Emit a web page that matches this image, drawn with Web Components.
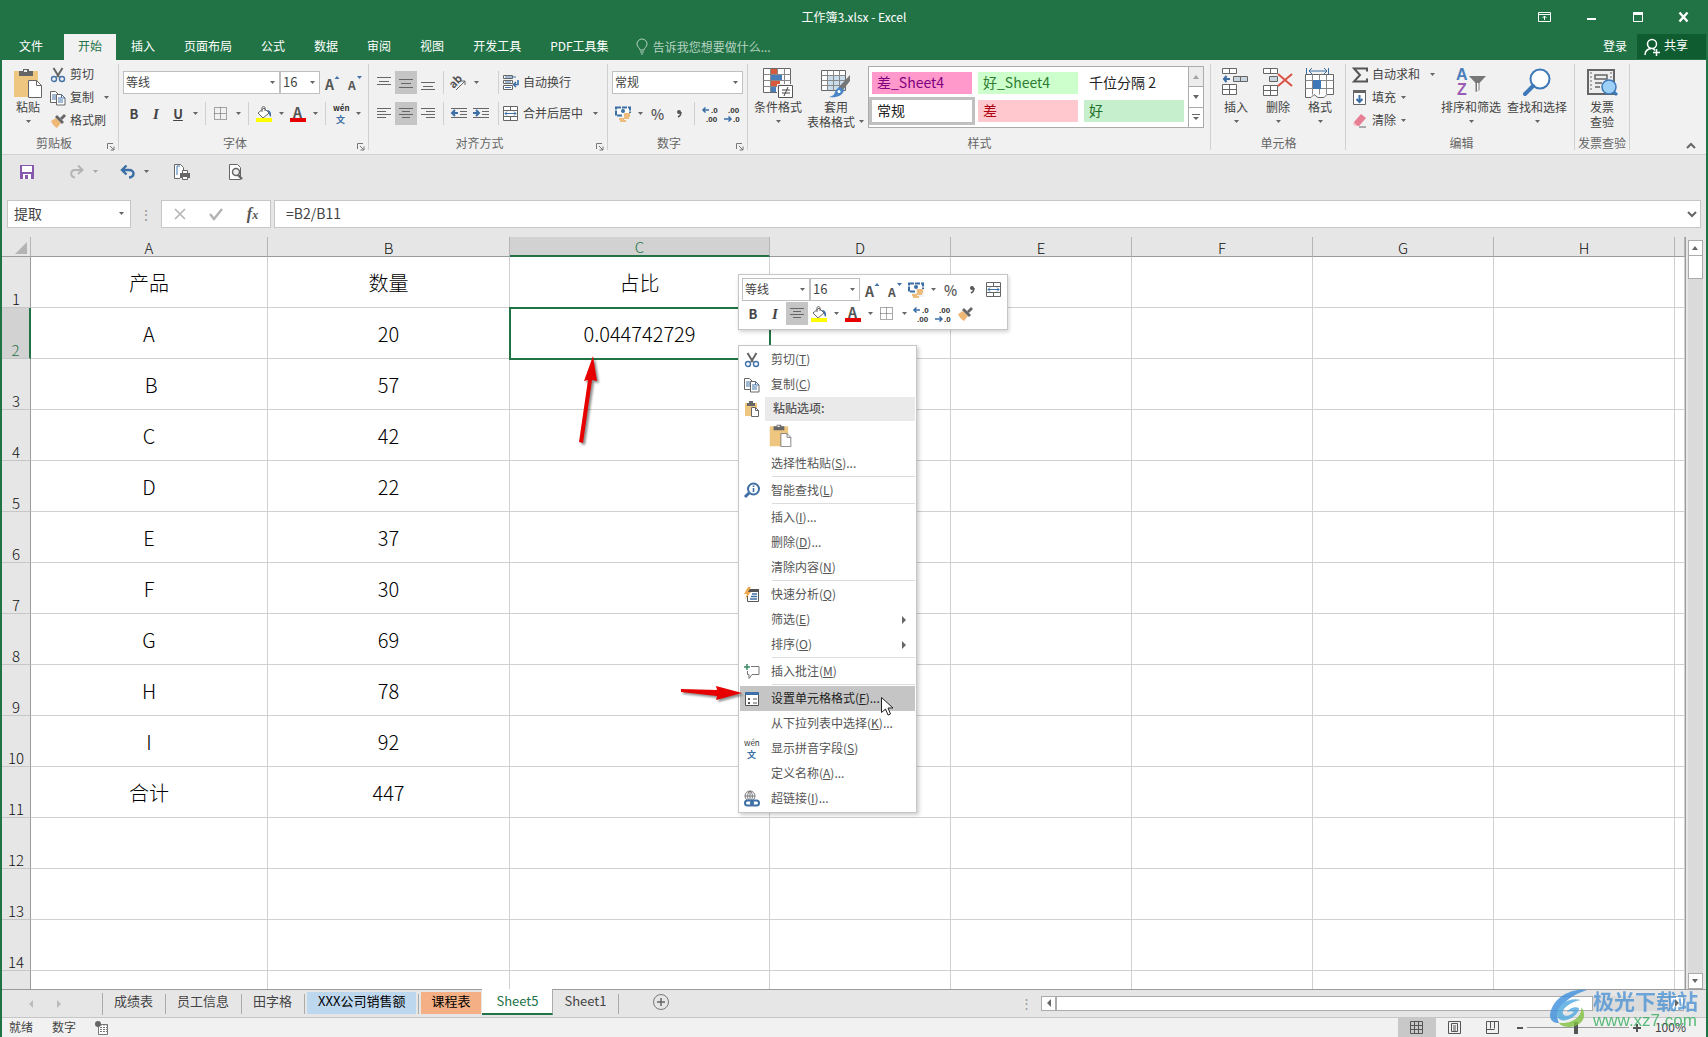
<!DOCTYPE html>
<html lang="zh-CN">
<head>
<meta charset="utf-8">
<title>工作簿3.xlsx - Excel</title>
<style>
html, body { margin: 0; height: 100%; overflow: hidden; }
body { font: 12px/16px "Noto Sans CJK SC", "Noto Sans", sans-serif; color: #444; }
</style>
</head>
<body>
<xl-app></xl-app>
<script>
const ICONS = {
  caret: [7, 4, '<path d="M1 0h5L3.500 3z" fill="#666"/>'],
  paste: [30, 30, '<path d="M1 3h24v26H1z" fill="#efc67f"/><path d="M6 3h4V1h6v2h4v5H6z" fill="#666"/><path d="M11 2h3v2h-3z" fill="#eee"/><path d="M15.500 12.500h8l5 5v12h-13z" fill="#fff" stroke="#666"/><path d="M23.500 12.500v5h5" fill="none" stroke="#666"/>'],
  pasteSmall: [16, 16, '<path d="M1 2h12v13H1z" fill="#efc67f"/><path d="M3 2h2V0h4v2h2v3H3z" fill="#666"/><path d="M7.500 6.500h4l3 3v6h-7z" fill="#fff" stroke="#666"/><path d="M11.500 6.500v3h3" fill="none" stroke="#666"/>'],
  cut: [16, 16, '<path d="M3.500 1l5.500 9M12.500 1L7 10" stroke="#666" stroke-width="2" fill="none"/><circle cx="4" cy="12" r="2.500" fill="none" stroke="#4472a8" stroke-width="1.400"/><circle cx="12" cy="12" r="2.500" fill="none" stroke="#4472a8" stroke-width="1.400"/>'],
  copy: [16, 16, '<path d="M.5 1.500h5l3 3v8h-8z" fill="#fff" stroke="#666"/><path d="M2 5h4M2 7h4M2 9h4" stroke="#4472a8"/><path d="M6.500 4.500h5l3.500 3.500v7h-8.500z" fill="#fff" stroke="#666"/><path d="M11.500 4.500v3.500h3.500M8 8h3M8 10h5M8 12h5" fill="none" stroke="#4472a8"/>'],
  brush: [16, 16, '<path d="M1 8l5-3 5 5-4 5c-2-1-5-4-6-7z" fill="#efb877"/><path d="M5 4l2-2 7 7-2 2z" fill="#666"/><path d="M10 5l4-4 2 2-4 4z" fill="#666"/>'],
  incFont: [16, 16, '<text x="1" y="15" font-size="14" font-weight="700" fill="#555">A</text><path d="M10.500 4h5L13 1z" fill="#4472a8"/>'],
  decFont: [16, 16, '<text x="2" y="15" font-size="12" font-weight="700" fill="#555">A</text><path d="M11 1h5l-2.500 3z" fill="#4472a8"/>'],
  borders: [14, 14, '<path d="M.5.500h12v12H.5zM6.500.500v12M.5 6.500h12" fill="none" stroke="#555" stroke-dasharray="1 1"/>'],
  fill: [16, 16, '<path d="M2 7l6-5 5 5-6 5z" fill="#fff" stroke="#666"/><path d="M6 6V2c0-2 3-2 3 0v3" fill="none" stroke="#666"/><path d="M11 4c3 0 4.500 2 4 7-2-1-2-3-2-4z" fill="#4472a8"/><path d="M0 12h16v4H0z" fill="#ff0"/>'],
  fontColor: [16, 16, '<text x="3" y="12" font-size="14" font-weight="700" fill="#555">A</text><path d="M0 12h16v4H0z" fill="#e80000"/>'],
  wen: [18, 18, '<text x="1" y="6" font-size="8" fill="#333">wén</text><text x="4" y="18" font-size="9" font-weight="700" fill="#3a6ea5">文</text>'],
  alTop: [16, 16, '<path d="M1 2.500h14M3 6.500h10M1 9.500h14" stroke="#666"/>'],
  alMid: [16, 16, '<path d="M1 4.500h14M3 8.500h10M1 12.500h14" stroke="#666"/>'],
  alBot: [16, 16, '<path d="M1 7.500h14M3 11.500h10M1 14.500h14" stroke="#666"/>'],
  left: [16, 16, '<path d="M1 2.500h14M1 5.500h9M1 8.500h14M1 11.500h9" stroke="#666"/>'],
  center: [16, 16, '<path d="M1 2.500h14M4 5.500h8M1 8.500h14M4 11.500h8" stroke="#666"/>'],
  right: [16, 16, '<path d="M1 2.500h14M6 5.500h9M1 8.500h14M6 11.500h9" stroke="#666"/>'],
  orient: [18, 16, '<g transform="rotate(-45 7 9)"><text x="1" y="10" font-size="11" font-weight="700" fill="#555">ab</text></g><path d="M6 15L15 6M11 6h4v4" stroke="#666" fill="none"/>'],
  outdent: [16, 16, '<path d="M0 2.500h16M9 5.500h7M9 8.500h7M0 11.500h16" stroke="#666"/><path d="M7 7H1M4 4L1 7l3 3" stroke="#3a6ea5" stroke-width="2" fill="none"/>'],
  indent: [16, 16, '<path d="M0 2.500h16M9 5.500h7M9 8.500h7M0 11.500h16" stroke="#666"/><path d="M0 7h6M3 4l3 3-3 3" stroke="#3a6ea5" stroke-width="2" fill="none"/>'],
  wrap: [16, 16, '<path d="M.5.500h9v3h-9zM.5 5.500h9v3h-9zM.5 10.500h9v4h-9z" fill="#fff" stroke="#666"/><path d="M2 2h11M2 7h6M2 12.500h6" stroke="#4472a8"/><path d="M15 5v4.500h-4M13 7l-2.500 2.500L13 12" stroke="#3a6ea5" fill="none" stroke-width="1.500"/>'],
  merge: [16, 16, '<path d="M.5.500h14v14H.5zM.5 4.500h14M.5 10.500h14M7.500.500v4M7.500 10.500v4" fill="#fff" stroke="#666"/><path d="M2 7.500h11M4 5.500l-2 2 2 2M11 5.500l2 2-2 2" stroke="#3a6ea5" fill="none"/>'],
  money: [16, 16, '<path d="M1 1.500h14v8H1z" fill="#fff" stroke="#3a6ea5" stroke-width="2" stroke-dasharray="5 1"/><circle cx="8" cy="5" r="2" fill="#3a6ea5"/><path d="M8 7h8v8H4v-4h4z" fill="#f1f1f1"/><path d="M9 8h6M9 10h6M9 12h5M4 13h5M5 15h6" stroke="#eba956" stroke-width="1.500"/>'],
  pct: [16, 16, '<text x="2" y="14" font-size="14" font-weight="500" fill="#555">%</text>'],
  comma: [16, 16, '<circle cx="8" cy="6" r="2" fill="#555"/><path d="M10 6c0 3-1 4-3 5" stroke="#555" fill="none" stroke-width="1.500"/>'],
  incDec: [18, 16, '<g font-family="Liberation Sans" font-size="8" fill="#333"><text x="10" y="7">.0</text><text x="5" y="16">.00</text></g><path d="M8 4H2M4.500 1.500L2 4l2.500 2.500" stroke="#3a6ea5" fill="none" stroke-width="1.500"/>'],
  decDec: [18, 16, '<g font-family="Liberation Sans" font-size="8" fill="#333"><text x="5" y="7">.00</text><text x="10" y="16">.0</text></g><path d="M1 13h7M5.500 10.500L8 13l-2.500 2.500" stroke="#3a6ea5" fill="none" stroke-width="1.500"/>'],
  cond: [30, 30, '<path d="M.5.500h27v24H.5z" fill="#fff" stroke="#666"/><path d="M.5 6.500h27M.5 12.500h27M.5 18.500h27M7.500.500v24M14.500.500v24M21.500.500v24" stroke="#888"/><path d="M8 1h6v5H8zM8 13h9v5H8z" fill="#d9593c"/><path d="M8 7h11v5H8zM8 19h5v5H8z" fill="#4a7ebb"/><path d="M14 16h16v14H14z" fill="#f1f1f1"/><path d="M15.500 17.500h14v12h-14z" fill="#fff" stroke="#555"/><path d="M19 22h8M19 25h8M25 19l-4 9" stroke="#444"/>'],
  tableFmt: [30, 30, '<path d="M.5 2.500h24v20H.5z" fill="#fff" stroke="#666"/><path d="M7 8h17v14H7z" fill="#c9dcec"/><path d="M.5 7.500h24M.5 12.500h24M.5 17.500h24M6.500 2.500v20M12.500 2.500v20M18.500 2.500v20" stroke="#888"/><path d="M29 7v6l-8 10-4-3z" fill="#777"/><path d="M19 19l4 3c-1 6-8 8-15 7 4-1 5-2 6-5 1-3 3-4 5-5z" fill="#4a86c5"/><circle cx="18" cy="23.500" r="1.500" fill="#fff"/>'],
  insCells: [28, 30, '<path d="M.5.500h14v5H.5zM7.500.500v5M.5 16.500h14v10H.5zM7.500 16.500v10M.5 21.500h14" fill="#fff" stroke="#666"/><path d="M11.500 8.500h14v5h-14zM18.500 8.500v5" fill="#c9d6e0" stroke="#666"/><path d="M8 11H2M4.500 8L2 11l2.500 3" fill="none" stroke="#3a6ea5" stroke-width="2"/>'],
  delCells: [30, 30, '<path d="M.5.500h14v5H.5zM7.500.500v5M.5 17.500h14v10H.5zM7.500 17.500v10M.5 22.500h14" fill="#fff" stroke="#666"/><path d="M6.500 8.500h8v5h-8z" fill="#c9d6e0" stroke="#666"/><path d="M15 6l14 12M29 6L15 18" fill="none" stroke="#dd5145" stroke-width="2"/>'],
  fmtCells: [30, 31, '<path d="M1.500 0v6M23.500 0v6M4 3h18M7 0L4 3l3 3M19 0l3 3-3 3" stroke="#3a6ea5" fill="none"/><path d="M.5 6.500h28v20H22l-3 3h-6l-4-3-3 3H.5z" fill="#fff" stroke="#666"/><path d="M7.500 6.500v20M14.500 6.500v20M21.500 6.500v20M.5 12.500h28M.5 20.500h28" stroke="#888"/><path d="M8 12h8v9H8z" fill="#3f78b8"/>'],
  sum: [16, 16, '<path d="M15 4.500V1.500H2l6 6.500-6 6.500h13v-3" fill="none" stroke="#555" stroke-width="2"/>'],
  fillDown: [16, 16, '<path d="M1.500 1.500h12v13h-12z" fill="#fff" stroke="#666"/><path d="M1 0h13v3H1z" fill="#666"/><path d="M7.500 5v7M4.500 9l3 3 3-3" fill="none" stroke="#3a6ea5" stroke-width="2"/>'],
  eraser: [16, 16, '<path d="M2 9l7-8 5 4-7 8H4z" fill="#e77f94"/><path d="M1 9l5 4H3l-2-2z" fill="#f6c1cb"/><path d="M7 14h7" stroke="#666"/>'],
  sort: [30, 30, '<g font-family="Liberation Sans" font-size="16" font-weight="700"><text x="0" y="12" fill="#4a7ebb">A</text><text x="1" y="27" fill="#9a5cb4">Z</text></g><path d="M13 8h17l-6.500 7v7l-4 2v-9z" fill="#777"/><path d="M21 15h1.500v7l-1.500 1z" fill="#fff"/>'],
  find: [30, 30, '<circle cx="18" cy="11" r="9.500" fill="#fdfdfd" stroke="#3f78b8" stroke-width="2"/><path d="M11 18L3 26" stroke="#3f78b8" stroke-width="4" stroke-linecap="round"/>'],
  invoice: [32, 30, '<path d="M2 2h26v24H2z" fill="#eee" stroke="#666" stroke-width="2"/><path d="M5 4v20M25 4v9" stroke="#666" stroke-dasharray="2 2"/><path d="M9 7h12v4H9zM9 15h7M9 19h5" fill="none" stroke="#666" stroke-width="1.500"/><circle cx="23" cy="19" r="7" fill="#9cd0f7" stroke="#3f78b8" stroke-width="1.500"/><path d="M28 24l3 3" stroke="#3f78b8" stroke-width="3"/>'],
  launcher: [8, 8, '<path d="M.5 6V.5H6M3 3l4 4M7 3.500V7H3.500" fill="none" stroke="#777"/>'],
  chevUp: [10, 8, '<path d="M1 6l4-4 4 4" fill="none" stroke="#666" stroke-width="2"/>'],
  chevDown: [10, 8, '<path d="M1 2l4 4 4-4" fill="none" stroke="#666" stroke-width="2"/>'],
  save: [16, 16, '<path d="M1 1h14v14H1z" fill="#8658ae"/><path d="M3 2h10v6H3zM4 10h8v5H4z" fill="#fff"/><path d="M6 11h3v4H6z" fill="#8658ae"/>'],
  redo: [16, 16, '<path d="M13 6H6c-5 0-5 7 0 7.500M9 1.500L13.500 6 9 10" fill="none" stroke="#b4b4b4" stroke-width="2"/>'],
  undo: [16, 16, '<path d="M2 6h7c6 0 6 7 0 7.500M6.500 1.500L2 6l4.500 4.500" fill="none" stroke="#3a6ea5" stroke-width="2.400"/>'],
  print: [18, 18, '<path d="M7 15.500H1.500v-14h6l3 3V7" fill="#fff" stroke="#666"/><path d="M4 3v9M4 3h3" stroke="#3f78b8" fill="none"/><path d="M7 10h10v5H7z" fill="#666"/><path d="M9.500 7.500h5v3h-5zM9.500 13.500h5v3h-5z" fill="#fff" stroke="#666"/>'],
  preview: [16, 18, '<path d="M1.500 1.500h8l3 3v12h-11z" fill="#fff" stroke="#666"/><circle cx="8" cy="9" r="3.500" fill="#eee" stroke="#666" stroke-width="1.500"/><path d="M10 12l4 4" stroke="#666" stroke-width="2.400"/>'],
  cancel: [12, 12, '<path d="M1 1l10 10M11 1L1 11" stroke="#b4b4b4" stroke-width="1.600"/>'],
  ok: [14, 12, '<path d="M1 6l4 5 8-10" stroke="#b4b4b4" stroke-width="2.400" fill="none"/>'],
  bulb: [12, 16, '<path d="M4 11c0-2-3-3-3-6a5 5 0 0 1 10 0c0 3-3 4-3 6zM4 13h4M5 15h2" fill="none" stroke="#b5d2c0"/>'],
  share: [18, 18, '<circle cx="9" cy="6" r="4.500" fill="none" stroke="#fff" stroke-width="1.500"/><path d="M2 17c0-4 3-6 6-6.500M10 10.500l2 2M10 14.500h7M13.500 11v7" fill="none" stroke="#fff" stroke-width="1.500"/>'],
  ribbonOpt: [14, 12, '<path d="M.5 1.500h12v9H.5zM.5 3.500h12M6.500 9V5M4.500 7l2-2 2 2" fill="none" stroke="#fff"/>'],
  min: [12, 12, '<path d="M1 8h9" stroke="#fff" stroke-width="2"/>'],
  max: [12, 12, '<path d="M1.500 1.500h9v9h-9z" fill="none" stroke="#fff"/><path d="M1 1h10v3H1z" fill="#fff"/>'],
  close: [12, 12, '<path d="M1.500 1.500l8 9M9.500 1.500l-8 9" stroke="#fff" stroke-width="2.400"/>'],
  up: [8, 8, '<path d="M1 6h6L4 2z" fill="#666"/>'],
  down: [8, 8, '<path d="M1 2h6L4 6z" fill="#666"/>'],
  lt: [8, 8, '<path d="M6 0v8L2 4z" fill="#666"/>'],
  rt: [8, 8, '<path d="M2 0v8l4-4z" fill="#666"/>'],
  ltOff: [8, 8, '<path d="M6 0v8L2 4z" fill="#bbb"/>'],
  rtOff: [8, 8, '<path d="M2 0v8l4-4z" fill="#bbb"/>'],
  more: [8, 8, '<path d="M0 1.500h8" stroke="#666"/><path d="M1 4h6L4 7z" fill="#666"/>'],
  plus: [18, 18, '<circle cx="9" cy="9" r="7.500" fill="none" stroke="#777"/><path d="M5 9h8M9 5v8" stroke="#666" stroke-width="1.500"/>'],
  zoomOut: [8, 8, '<path d="M1 4h6" stroke="#555" stroke-width="2"/>'],
  zoomIn: [8, 8, '<path d="M0 4h8M4 0v8" stroke="#555" stroke-width="2"/>'],
  macro: [14, 14, '<path d="M3.500 3.500h9v10h-9z" fill="#fff" stroke="#777"/><path d="M5 4h8M5 6.500h7M5 8.500h7M5 10.500h7" stroke="#777" stroke-dasharray="2 1"/><circle cx="3" cy="3" r="3" fill="#666"/>'],
  vNormal: [14, 14, '<path d="M.5.500h12v12H.5zM4.500.500v12M8.500.500v12M.5 4.500h12M.5 8.500h12" fill="none" stroke="#555"/>'],
  vPage: [14, 14, '<path d="M.5.500h12v12H.5zM3.500 2.500h6v8h-6zM5 5h3M5 7h3M5 9h3" fill="none" stroke="#555"/>'],
  vBreak: [14, 14, '<path d="M.5.500h12v12H.5zM4.500.500v7M8.500.500v7M.5 8.500h8" fill="none" stroke="#555"/>'],
  smart: [18, 18, '<circle cx="10.500" cy="7" r="5.500" fill="#fff" stroke="#3f6fa5" stroke-width="2"/><path d="M6 11l-4 4" stroke="#3f6fa5" stroke-width="3"/><path d="M10.500 6v4M10.500 3.500v1.500" stroke="#3f6fa5" stroke-width="1.600"/>'],
  quick: [16, 16, '<path d="M3.500 2.500h11v12h-11z" fill="#fff" stroke="#555"/><path d="M4 2h11v3H4z" fill="#555"/><path d="M8 7h5M7 9.500h6M6 12h7" stroke="#3f6fa5" stroke-width="1.500"/><path d="M4 0L0 7h3l-2 5 6-7H4l3-5z" fill="#f0a94c"/>'],
  comment: [16, 16, '<path d="M7 2.500h8v8H8l-3 4v-4H3.500V7" fill="none" stroke="#777"/><path d="M3 0v6M0 3h6" stroke="#3b8a66" stroke-width="1.500"/>'],
  format: [16, 16, '<path d="M1.500 1.500h13v13h-13z" fill="#fff" stroke="#555"/><path d="M1 1h14v3H1z" fill="#3f6fa5"/><path d="M9 8h4M9 12h4" stroke="#555"/><path d="M4 7h2v2H4zM4 11h2v2H4z" fill="#555"/>'],
  link: [18, 18, '<circle cx="7" cy="6" r="5" fill="none" stroke="#777"/><path d="M7 1v10M2 6h10M7 1C4 3 4 8 6 11M7 1c3 2 3 7 1 10" fill="none" stroke="#777"/><rect x="2" y="10.500" width="8" height="5" rx="2.500" fill="#fff" stroke="#3f6fa5" stroke-width="2"/><rect x="8" y="10.500" width="8" height="5" rx="2.500" fill="none" stroke="#3f6fa5" stroke-width="2"/>']
};

function define(tag, css, html) {
  const tpl = document.createElement('template');
  customElements.define(tag, class extends HTMLElement {
    connectedCallback() {
      if (this.shadowRoot) return;
      tpl.innerHTML = `<style>*{box-sizing:border-box}button{font:inherit;color:inherit;background:none;border:0;padding:0;margin:0;cursor:default}select,input{font:inherit;color:inherit;margin:0;border-radius:0;outline:0}${css}</style>` +
        (typeof html === 'function' ? html(this) : html);
      this.attachShadow({ mode: 'open' }).append(tpl.content.cloneNode(true));
    }
  });
}
const ic = n => `<xl-icon name="${n}"></xl-icon>`;
const tool = (n, label, opts = '') => `<xl-tool icon="${n}" label="${label}" ${opts}></xl-tool>`;

define('xl-icon', ':host{display:block;flex:none}svg{display:block;overflow:visible}', el => {
  const [w, h, body] = ICONS[el.getAttribute('name')];
  return `<svg width="${w}" height="${h}" viewBox="0 0 ${w} ${h}" aria-hidden="true">${body}</svg>`;
});

define('xl-tool', `
  :host{display:block;flex:none}
  button{display:flex;align-items:center;height:23px}
  .face{width:22px;height:23px;display:flex;align-items:center;justify-content:center;font-size:13px;font-weight:700;color:#444}
  :host([on]) .face{background:#c5c5c5}
  .drop{width:12px;display:flex;justify-content:center}`,
  el => `<button aria-label="${el.getAttribute('label')}"><span class="face">${el.getAttribute('icon') ? ic(el.getAttribute('icon')) : '<slot></slot>'}</span>${el.hasAttribute('drop') ? `<span class="drop">${ic('caret')}</span>` : ''}</button>`);

define('xl-row-command', `
  :host{display:block}
  button{display:flex;align-items:center;height:23px;gap:4px;white-space:nowrap}
  .txt{padding-bottom:2px}
  .drop{padding-left:var(--drop-gap,0px)}`,
  el => `<button>${ic(el.getAttribute('icon'))}<span class="txt"><slot></slot></span>${el.hasAttribute('drop') ? `<span class="drop">${ic('caret')}</span>` : ''}</button>`);

define('xl-big-command', `
  :host{display:block;flex:none}
  button{width:100%;display:flex;flex-direction:column;align-items:center;padding-top:8px;line-height:15px;white-space:nowrap}
  .pic{height:31px}
  .last{display:flex;align-items:center;gap:3px;height:15px}`,
  el => {
    const second = el.getAttribute('second') || '';
    return `<button><span class="pic">${ic(el.getAttribute('icon'))}</span><span><slot></slot></span><span class="last">${second}${el.hasAttribute('drop') ? ic('caret') : ''}</span></button>`;
  });

define('xl-group', `
  :host{display:flex;flex-direction:column;flex:none;padding:0 0 0 4px;height:94px;position:relative}
  :host::after{content:"";position:absolute;right:0;top:4px;height:86px;border-right:1px solid #d0d0d0}
  .body{display:flex;height:75px;align-items:flex-start}
  .label{display:flex;height:16px;color:#666;justify-content:center;padding-right:4px;white-space:nowrap}
  :host([launch]) .label{padding-right:22px}
  .launch{position:absolute;right:4px;bottom:3px}`,
  el => `<div class="body"><slot></slot></div><div class="label">${el.getAttribute('label')}</div>${el.hasAttribute('launch') ? `<button class="launch" aria-label="${el.getAttribute('label')}设置">${ic('launcher')}</button>` : ''}`);

define('xl-select', `
  :host{display:flex;position:relative;height:23px}
  select{appearance:none;width:100%;height:23px;border:1px solid #c0c0c0;background:#fff;padding:0 2px 1px;font-size:var(--select-size,12px)}
  xl-icon{position:absolute;right:4px;top:10px;pointer-events:none}`,
  el => `<select aria-label="${el.getAttribute('label')}"><option>${el.getAttribute('value')}</option></select>${ic('caret')}`);

define('xl-titlebar', `
  :host{display:grid;grid-template-columns:1fr auto 1fr;height:34px;background:#217346;color:#fff;align-items:center}
  .win{display:flex;justify-content:flex-end;gap:34px;padding:0 16px 1px 0}
  .title{grid-column:2}`,
  `<span class="title">工作簿3.xlsx - Excel</span><div class="win"><button aria-label="功能区显示选项">${ic('ribbonOpt')}</button><button aria-label="最小化">${ic('min')}</button><button aria-label="最大化">${ic('max')}</button><button aria-label="关闭">${ic('close')}</button></div>`);

define('xl-ribbon-tabs', `
  :host{display:flex;height:26px;background:#217346;color:#fff;padding-left:3px;gap:1px}
  nav{display:flex;gap:1px}
  nav button,.login{padding:0 14px 3px;white-space:nowrap}
  nav button:first-child{margin-right:6px}
  .on{background:#f1f1f1;color:#217346}
  .tell{display:flex;align-items:center;gap:5px;color:#b5d2c0;padding-left:12px}
  .tell span{padding-bottom:1px}
  .end{margin-left:auto;display:flex}
  .login{padding:0 10px 3px}
  .share{display:flex;gap:3px;align-items:center;background:#0e5c2f;width:69px;padding-left:6px;margin-bottom:1px}
  .share span{padding-bottom:4px}`,
  `<nav>${['文件', '开始', '插入', '页面布局', '公式', '数据', '审阅', '视图', '开发工具', 'PDF工具集'].map((t, i) => `<button${i === 1 ? ' class="on"' : ''}>${t}</button>`).join('')}</nav>
   <button class="tell">${ic('bulb')}<span>告诉我您想要做什么...</span></button>
   <div class="end"><button class="login">登录</button><button class="share">${ic('share')}<span>共享</span></button></div>`);

define('xl-styles-gallery', `
  :host{display:flex;border:1px solid #ababab;background:#fff;height:62px;margin-top:6px}
  .cells{display:grid;grid-template-columns:repeat(3,100px);grid-auto-rows:22px;gap:6px;padding:5px 4px 5px 3px}
  .cells button{text-align:left;padding:0 0 2px 5px;font-size:14px;line-height:20px}
  .sel{outline:3px solid #c0c0c0}
  .side{display:flex;flex-direction:column;width:15px;border-left:1px solid #ababab}
  .side button{flex:1;display:flex;align-items:center;justify-content:center}
  .side button+button{border-top:1px solid #ababab}
  .side button:first-child{background:#e0e0e0;opacity:.6}`,
  `<div class="cells">
    <button style="background:#ff99cc;color:#800080">差_Sheet4</button><button style="background:#ccffcc;color:#2e7d32">好_Sheet4</button><button style="color:#222">千位分隔 2</button>
    <button class="sel" style="color:#222">常规</button><button style="background:#ffc7ce;color:#b00010">差</button><button style="background:#c6efce;color:#1e7028">好</button></div>
   <div class="side"><button aria-label="向上">${ic('up')}</button><button aria-label="向下">${ic('down')}</button><button aria-label="其他">${ic('more')}</button></div>`);

define('xl-ribbon', `
  :host{display:flex;height:95px;background:#f1f1f1;border-bottom:1px solid #d2d2d2}
  .col{display:flex;flex-direction:column}
  .three{padding-top:3px}
  .rows{padding-top:11px;gap:8px}
  .row{display:flex;align-items:center;height:23px}
  i.s{flex:none;width:1px;height:23px;background:#d0d0d0;margin:0 4px}
  .mid{display:flex;width:46px}
  .fold{margin:auto 10px 4px auto}
  .wide{--drop-gap:5px}`,
  `<xl-group label="剪贴板" launch style="width:117px;padding-left:9px">
     <xl-big-command icon="paste" drop style="width:34px">粘贴</xl-big-command>
     <div class="col three" style="padding-left:5px"><xl-row-command icon="cut">剪切</xl-row-command><xl-row-command class="wide" icon="copy" drop>复制</xl-row-command><xl-row-command icon="brush">格式刷</xl-row-command></div>
   </xl-group>
   <xl-group label="字体" launch style="width:250px">
     <div class="col rows">
       <div class="row"><xl-select label="字体" value="等线" style="width:157px"></xl-select><xl-select label="字号" value="16" style="width:40px;--select-size:13px;margin-right:1px"></xl-select>${tool('incFont', '增大字号')}${tool('decFont', '减小字号')}</div>
       <div class="row">${'<xl-tool label="加粗">B</xl-tool><xl-tool label="倾斜"><em style="font-family:Liberation Serif,serif;font-size:15px">I</em></xl-tool><xl-tool label="下划线" drop><u>U</u></xl-tool>'}<i class="s"></i>${tool('borders', '边框', 'drop')}<i class="s"></i>${tool('fill', '填充颜色', 'drop')}${tool('fontColor', '字体颜色', 'drop')}<i class="s"></i>${tool('wen', '拼音', 'drop')}</div>
     </div>
   </xl-group>
   <xl-group label="对齐方式" launch style="width:239px">
     <div class="col rows">
       <div class="row">${tool('alTop', '顶端对齐')}${tool('alMid', '垂直居中', 'on')}${tool('alBot', '底端对齐')}<i class="s"></i><div class="mid">${tool('orient', '方向', 'drop')}</div><i class="s"></i><xl-row-command icon="wrap">自动换行</xl-row-command></div>
       <div class="row">${tool('left', '左对齐')}${tool('center', '居中', 'on')}${tool('right', '右对齐')}<i class="s"></i><div class="mid">${tool('outdent', '减少缩进量')}${tool('indent', '增加缩进量')}</div><i class="s"></i><xl-row-command class="wide" icon="merge" drop>合并后居中</xl-row-command></div>
     </div>
   </xl-group>
   <xl-group label="数字" launch style="width:140px">
     <div class="col rows">
       <xl-select label="数字格式" value="常规" style="width:131px"></xl-select>
       <div class="row">${tool('money', '会计数字格式', 'drop')}${tool('pct', '百分比')}${tool('comma', '千位分隔')}<i class="s"></i>${tool('incDec', '增加小数位数')}${tool('decDec', '减少小数位数')}</div>
     </div>
   </xl-group>
   <xl-group label="样式" style="width:463px">
     <xl-big-command icon="cond" drop style="width:52px">条件格式</xl-big-command>
     <xl-big-command icon="tableFmt" second="表格格式" drop style="width:64px">套用</xl-big-command>
     <xl-styles-gallery></xl-styles-gallery>
   </xl-group>
   <xl-group label="单元格" style="width:135px">
     <xl-big-command icon="insCells" drop style="width:42px">插入</xl-big-command><xl-big-command icon="delCells" drop style="width:42px">删除</xl-big-command><xl-big-command icon="fmtCells" drop style="width:42px">格式</xl-big-command>
   </xl-group>
   <xl-group label="编辑" style="width:229px;padding-left:6px">
     <div class="col three" style="width:86px"><xl-row-command class="wide" icon="sum" drop>自动求和</xl-row-command><xl-row-command icon="fillDown" drop>填充</xl-row-command><xl-row-command icon="eraser" drop>清除</xl-row-command></div>
     <xl-big-command icon="sort" drop style="width:66px">排序和筛选</xl-big-command><xl-big-command icon="find" drop style="width:66px">查找和选择</xl-big-command>
   </xl-group>
   <xl-group label="发票查验" style="width:55px;padding-left:3px">
     <xl-big-command icon="invoice" second="查验" style="width:48px">发票</xl-big-command>
   </xl-group>
   <button class="fold" aria-label="折叠功能区">${ic('chevUp')}</button>`);

define('xl-quick-access', `
  :host{display:flex;align-items:center;height:33px;padding-left:17px;background:#e6e6e6}
  button{display:flex;align-items:center;gap:7px}
  :host>*{flex:none}
  .pale{opacity:.5}`,
  `<button aria-label="保存">${ic('save')}</button><button aria-label="恢复" style="margin-left:34px">${ic('redo')}<span class="pale">${ic('caret')}</span></button><button aria-label="撤消" style="margin-left:21px">${ic('undo')}${ic('caret')}</button><button aria-label="快速打印" style="margin-left:23px">${ic('print')}</button><button aria-label="打印预览" style="margin-left:37px">${ic('preview')}</button>`);

define('xl-formula-bar', `
  :host{display:flex;background:#e6e6e6;padding:12px 5px 9px 5px;height:49px;color:#444}
  .box{display:flex;align-items:center;background:#fff;border:1px solid #c6c6c6;height:28px}
  input{border:0;background:none;min-width:0;flex:1;height:26px;padding:0 0 2px 6px;font-size:14px}
  .formula input{padding-left:11px}
  .name{width:124px;padding-right:5px}
  .dots{width:30px;display:flex;justify-content:center;align-items:center;color:#999;font-size:14px}
  .tools{width:110px;justify-content:space-around;margin-right:3px}
  .tools em{font:italic 700 16px/20px "Liberation Serif",serif;color:#555}
  .tools small{font-size:12px}
  .formula{flex:1;padding-right:3px}`,
  `<div class="box name"><input aria-label="名称框" value="提取"><button aria-label="名称列表">${ic('caret')}</button></div><span class="dots">⋮</span>
   <div class="box tools"><button aria-label="取消">${ic('cancel')}</button><button aria-label="输入">${ic('ok')}</button><button aria-label="插入函数"><em>f<small>x</small></em></button></div>
   <div class="box formula"><input aria-label="编辑栏" value="=B2/B11"><button aria-label="展开编辑栏">${ic('chevDown')}</button></div>`);

const DATA = [['产品', '数量', '占比'], ['A', '20', '0.044742729'], ['&nbsp;B', '57'], ['C', '42'], ['D', '22'], ['E', '37'], ['F', '30'], ['G', '69'], ['H', '78'], ['I', '92'], ['合计', '447']];
define('xl-grid', `
  :host{display:flex;background:#e6e6e6;overflow:hidden}
  .view{flex:1;min-width:0;overflow:hidden;background:#fff;border-right:1px solid #9b9b9b}
  table{table-layout:fixed;width:100%;border-collapse:separate;border-spacing:0}
  th{font-weight:300;color:#111;background:#e6e6e6;padding:0}
  thead th{height:20px;font-size:15px;line-height:17px;border-right:1px solid #b5b5b5;border-bottom:1px solid #9b9b9b;vertical-align:bottom}
  thead th.on{background:#d2d2d2;color:#217346;border-bottom:2px solid #217346;line-height:16px}
  tbody th{height:51px;vertical-align:bottom;font-size:15px;line-height:16px;border-right:1px solid #9b9b9b;border-bottom:1px solid #c6c6c6}
  tbody th.on{background:#d2d2d2;color:#217346;border-right:2px solid #217346}
  td{border-right:1px solid #d0d0d0;border-bottom:1px solid #d0d0d0;text-align:center;vertical-align:middle;padding:2px 0 0;font-size:20px;line-height:28px;font-weight:300;color:#000}
  td.active{outline:2px solid #217346;outline-offset:-1px;position:relative}
  .corner svg{display:block;margin:0 3px 2px auto}
  .bar{width:20px;display:flex;flex-direction:column;align-items:center;padding:3px 2px 0 0;background:#e6e6e6}
  .bar button{width:15px;height:16px;background:#fff;border:1px solid #ababab;display:flex;align-items:center;justify-content:center}
  .bar .thumb{height:23px;border-top:0}
  .track{flex:1;width:15px;background:#dadada}`,
  () => {
    const cols = 'ABCDEFGH'.split('');
    const rows = Array.from({ length: 15 }, (_, r) => `<tr><th scope="row"${r === 1 ? ' class="on"' : ''}>${r < 14 ? r + 1 : ''}</th>${Array.from({ length: 9 }, (_, c) => `<td${r === 1 && c === 2 ? ' class="active"' : ''}>${(DATA[r] || [])[c] || ''}</td>`).join('')}</tr>`).join('');
    return `<div class="view"><table><colgroup><col style="width:29px"><col style="width:237px"><col style="width:242px"><col style="width:260px">${'<col style="width:181px">'.repeat(5)}<col></colgroup>
      <thead><tr><th class="corner"><svg width="12" height="12"><path d="M12 0v12H0z" fill="#b4b4b4"/></svg></th>${cols.map(c => `<th scope="col"${c === 'C' ? ' class="on"' : ''}>${c}</th>`).join('')}<th></th></tr></thead><tbody>${rows}</tbody></table></div>
      <div class="bar"><button aria-label="向上滚动">${ic('up')}</button><button class="thumb" aria-label="滚动块"></button><div class="track"></div><button aria-label="向下滚动">${ic('down')}</button></div>`;
  });

define('xl-sheet-tabs', `
  :host{display:flex;height:28px;background:#e6e6e6;border-top:1px solid #9b9b9b;font-size:13px}
  .nav{display:flex;align-items:center;gap:20px;width:101px;padding-left:25px;border-right:1px solid #ababab;height:22px;margin-top:3px}
  .tabs{display:flex}
  .tabs button{padding:0 12px 3px 11px;height:24px;white-space:nowrap}
  .tabs i{width:1px;height:20px;margin-top:4px;background:#ababab}
  .tabs .blue{background:#bdd7ee;color:#000;margin:2px 2px 0;height:22px;padding:0 11px 4px}
  .tabs .orange{background:#f4b084;color:#000;margin:2px 1px 0 2px;height:22px;padding:0 11px 4px 10px}
  .tabs .on{background:#fff;color:#217346;border-bottom:2px solid #217346;border-right:1px solid #ababab;margin-top:-1px;height:26px;padding:0 14px 1px}
  .add{display:flex;align-items:center;padding:0 33px 4px}
  .scroll{margin-left:auto;display:flex;align-items:center;width:686px;padding-bottom:1px;color:#999}
  .scroll .dots{width:21px}
  .scroll button{width:15px;height:15px;background:#fff;border:1px solid #ababab;display:flex;align-items:center;justify-content:center}
  .scroll .thumb{flex:7}
  .scroll .track{flex:1;height:15px;background:#dadada}
  .scroll .last{margin-right:22px}`,
  `<div class="nav"><button aria-label="上一个">${ic('ltOff')}</button><button aria-label="下一个">${ic('rtOff')}</button></div>
   <div class="tabs"><button>成绩表</button><i></i><button>员工信息</button><i></i><button>田字格</button><i></i><button class="blue">XXX公司销售额</button><i></i><button class="orange">课程表</button><button class="on">Sheet5</button><button>Sheet1</button><i></i></div>
   <button class="add" aria-label="新工作表">${ic('plus')}</button>
   <div class="scroll"><span class="dots">⋮</span><button aria-label="向左滚动">${ic('lt')}</button><button class="thumb" aria-label="水平滚动块"></button><div class="track"></div><button class="last" aria-label="向右滚动">${ic('rt')}</button></div>`);

define('xl-status-bar', `
  :host{display:flex;align-items:center;height:20px;background:#f1f1f1;border-top:1px solid #c6c6c6;padding:0 20px 0 7px;gap:19px}
  :host>span{padding-bottom:2px}
  .end{margin-left:auto;display:flex;align-items:center;height:19px}
  .view{width:38px;height:19px;display:flex;align-items:center;justify-content:center}
  .view.on{background:#c8c8c8}
  input{appearance:none;width:102px;height:14px;background:linear-gradient(#999,#999) center/100% 1px no-repeat}
  input::-webkit-slider-thumb{appearance:none;width:4px;height:12px;background:#555}
  .z{width:15px;height:16px;display:flex;align-items:center;justify-content:center}
  .pct{width:34px;text-align:right;margin-left:8px;padding-bottom:2px}`,
  `<span>就绪</span><span>数字</span>${ic('macro')}
   <div class="end"><button class="view on" aria-label="普通">${ic('vNormal')}</button><button class="view" aria-label="页面布局">${ic('vPage')}</button><button class="view" aria-label="分页预览">${ic('vBreak')}</button><button class="z" aria-label="缩小">${ic('zoomOut')}</button><input type="range" min="10" max="200" value="102" aria-label="显示比例"><button class="z" aria-label="放大">${ic('zoomIn')}</button><span class="pct">100%</span></div>`);

define('xl-mini-toolbar', `
  :host{display:flex;flex-direction:column;gap:1px;background:#fff;border:1px solid #c6c6c6;box-shadow:1px 2px 4px rgba(0,0,0,.18);padding:3px 2px 4px 3px}
  .row{display:flex;align-items:center}`,
  `<div class="row"><xl-select label="字体" value="等线" style="width:68px"></xl-select><xl-select label="字号" value="16" style="width:50px;--select-size:13px;margin-right:1px"></xl-select>${tool('incFont', '增大字号')}${tool('decFont', '减小字号')}${tool('money', '会计数字格式', 'drop')}${tool('pct', '百分比')}${tool('comma', '千位分隔')}${tool('merge', '合并后居中')}</div>
   <div class="row"><xl-tool label="加粗">B</xl-tool><xl-tool label="倾斜"><em style="font-family:Liberation Serif,serif;font-size:15px">I</em></xl-tool>${tool('center', '居中', 'on')}${tool('fill', '填充颜色', 'drop')}${tool('fontColor', '字体颜色', 'drop')}${tool('borders', '边框', 'drop')}${tool('incDec', '增加小数位数')}${tool('decDec', '减少小数位数')}${tool('brush', '格式刷')}</div>`);

define('xl-menu-item', `
  :host{display:block}
  button{display:flex;width:100%;height:25px;align-items:center;text-align:left;color:#555;white-space:nowrap}
  .pic{width:24px;display:flex;justify-content:center;flex:none}
  .txt{flex:1;padding:0 0 1px 7px}
  :host([on]) button{background:#c5c5c5;color:#222}
  :host([head]) button{height:24px;font-weight:500}
  :host([head]) .txt{background:#eaeaea;height:24px;line-height:22px;padding-left:8px;margin-left:1px}
  .more{padding-right:7px}`,
  el => `<button role="menuitem"><span class="pic">${el.getAttribute('icon') ? ic(el.getAttribute('icon')) : ''}</span><span class="txt"><slot></slot></span>${el.hasAttribute('more') ? `<span class="more">${ic('rt')}</span>` : ''}</button>`);

const item = (t, key, tail = '', icon = '', extra = '') => `<xl-menu-item icon="${icon}" ${extra}>${t}${key ? `(<u>${key}</u>)` : ''}${tail}</xl-menu-item>`;
define('xl-context-menu', `
  :host{display:block;width:179px;background:#fff;border:1px solid #c6c6c6;box-shadow:2px 2px 4px rgba(0,0,0,.2);padding:1px}
  hr{border:0;border-top:1px solid #dcdcdc;height:2px;margin:0 0 0 32px}
  .paste{display:block;height:30px;padding:2px 0 0 29px}`,
  `${item('剪切', 'T', '', 'cut')}${item('复制', 'C', '', 'copy')}${item('粘贴选项:', '', '', 'pasteSmall', 'head')}
   <button class="paste" aria-label="粘贴"><svg width="23" height="23" viewBox="0 0 30 30">${ICONS.paste[2]}</svg></button>
   ${item('选择性粘贴', 'S', '...')}<hr>${item('智能查找', 'L', '', 'smart')}<hr>${item('插入', 'I', '...')}${item('删除', 'D', '...')}${item('清除内容', 'N')}<hr>
   ${item('快速分析', 'Q', '', 'quick')}${item('筛选', 'E', '', '', 'more')}${item('排序', 'O', '', '', 'more')}<hr>${item('插入批注', 'M', '', 'comment')}<hr>
   ${item('设置单元格格式', 'F', '...', 'format', 'on')}${item('从下拉列表中选择', 'K', '...')}${item('显示拼音字段', 'S', '', 'wen')}${item('定义名称', 'A', '...')}${item('超链接', 'I', '...', 'link')}`);

define('xl-watermark', `
  :host{display:flex;gap:2px;pointer-events:none;opacity:.8}
  .name{font:700 21px/24px "Noto Sans CJK SC",sans-serif;color:#4f94d4}
  .url{font:17px/18px "Liberation Sans",sans-serif;color:#35ad5c}
  .words{display:flex;flex-direction:column}`,
  `<svg width="42" height="42" viewBox="0 0 42 42"><path d="M38 2C20 0 3 11 1 27c0 6 4 8 9 8C4 24 16 9 38 2z" fill="#3d8fdd"/><path d="M32 12C19 9 9 17 8 26c0 8 9 8 16 3 4-3 6-6 6-9-5-2-10 1-12 4 3-1 5-1 7 0-4 4-9 5-11 2-2-5 7-12 18-14z" fill="#4ea8df"/><path d="M32 19c2 8-7 17-22 16 2 3 6 4 11 4 13-1 18-12 11-20z" fill="#80c241"/></svg>
   <div class="words"><span class="name">极光下载站</span><span class="url">www.xz7.com</span></div>`);

define('xl-app', `
  :host{display:flex;flex-direction:column;height:100vh;position:relative;overflow:hidden;border:solid #217346;border-width:0 2px;background:#e6e6e6}
  :host>*{flex:none}
  :host>xl-grid{flex:1 1 0;min-height:0}
  .float{position:absolute}
  svg.float{overflow:visible;pointer-events:none}
  .shade{filter:drop-shadow(2px 2px 1px rgba(0,0,0,.45))}
  xl-watermark{right:8px;bottom:7px}`,
  `<xl-titlebar></xl-titlebar><xl-ribbon-tabs></xl-ribbon-tabs><xl-ribbon></xl-ribbon><xl-quick-access></xl-quick-access><xl-formula-bar></xl-formula-bar>
   <xl-grid></xl-grid><xl-sheet-tabs></xl-sheet-tabs><xl-status-bar></xl-status-bar>
   <xl-mini-toolbar class="float" style="left:736px;top:274px"></xl-mini-toolbar>
   <xl-context-menu class="float" style="left:736px;top:345px"></xl-context-menu>
   <svg class="float shade" style="left:576px;top:356px" width="24" height="88"><path d="M15 0L6 25l4-1L1 86l4 1 9-63 5 1z" fill="#e60000"/></svg>
   <svg class="float shade" style="left:678px;top:686px" width="64" height="16"><path d="M1 3l36 1-1-4 26 7-26 7 1-4L1 6z" fill="#e60000"/></svg>
   <svg class="float" style="left:879px;top:697px" width="14" height="20"><path d="M.5.500v15l4-3.500 2.500 6 2.500-1-2.500-6h5z" fill="#fff" stroke="#222"/></svg>
   <xl-watermark class="float"></xl-watermark>`);
</script>
</body>
</html>
